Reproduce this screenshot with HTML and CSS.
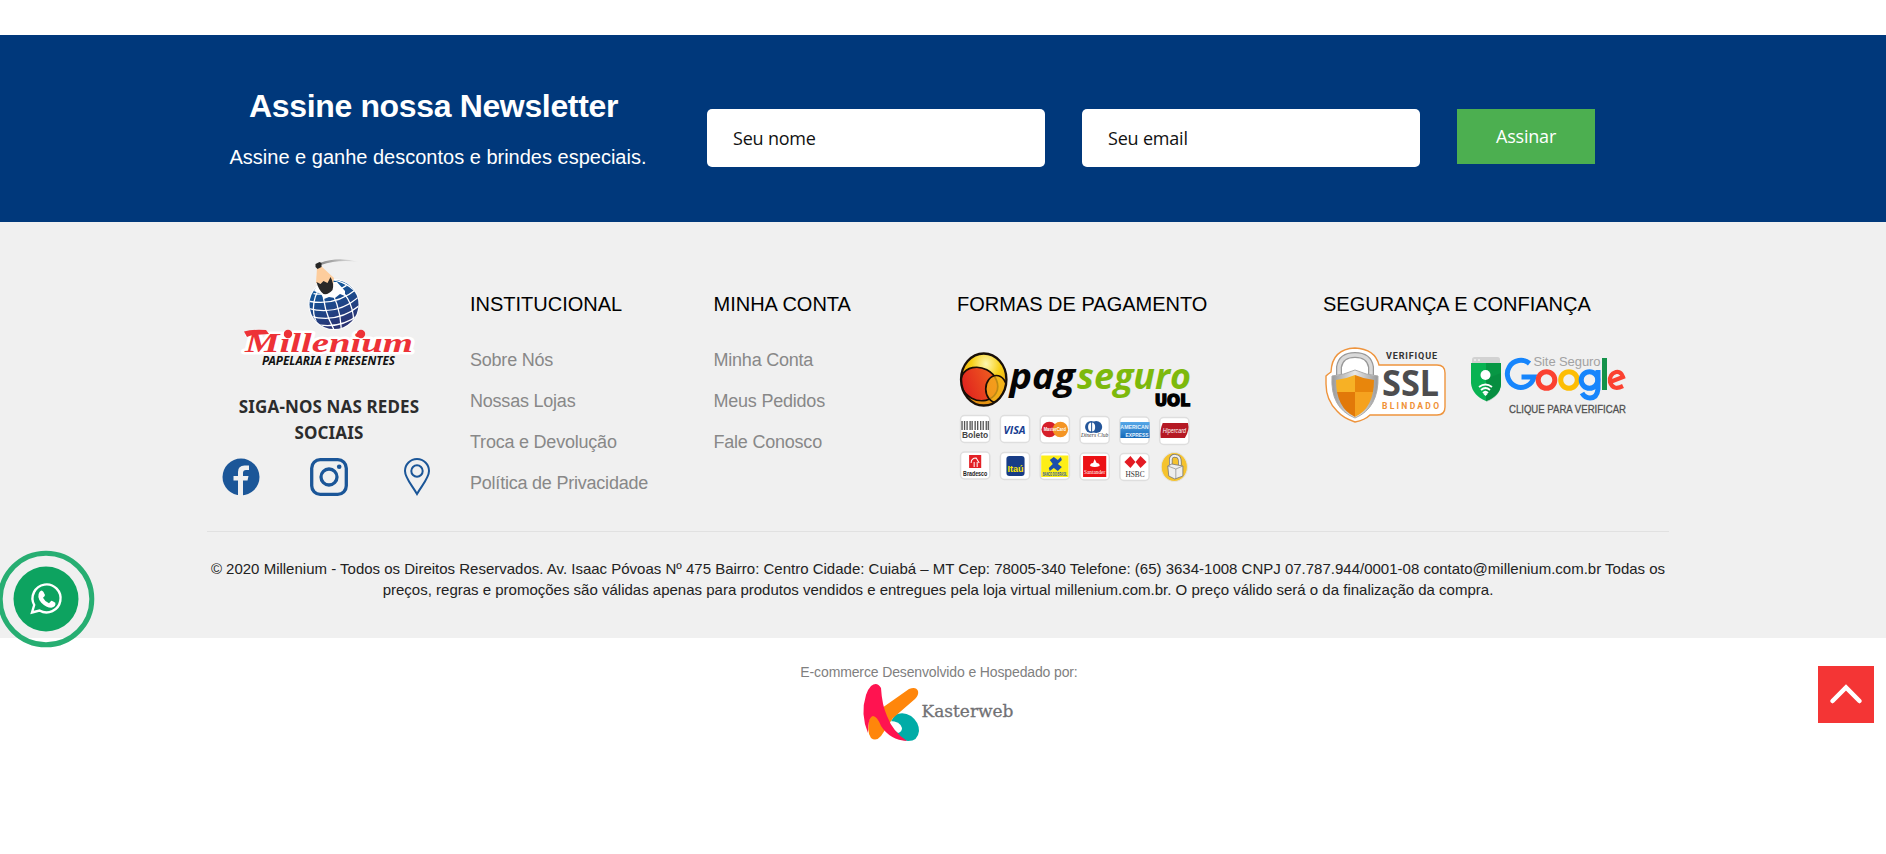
FILE: index.html
```html
<!DOCTYPE html>
<html lang="pt-BR">
<head>
<meta charset="utf-8">
<title>Millenium Papelaria e Presentes</title>
<link rel="stylesheet" href="styles.css">
</head>
<body>
<section class="newsletter">
  <div class="news-copy">
    <h2>Assine nossa Newsletter</h2>
    <p>Assine e ganhe descontos e brindes especiais.</p>
  </div>
  <form class="news-form">
    <input class="field" type="text" placeholder="Seu nome">
    <input class="field" type="text" placeholder="Seu email">
    <button class="subscribe" type="button">Assinar</button>
  </form>
</section>
<footer class="footer">
  <div class="cols">
    <div class="brand">
      <svg class="logo" width="180" height="112" viewBox="0 0 180 112">
        <defs>
          <linearGradient id="globe" x1="0" y1="0" x2=".4" y2="1"><stop offset="0" stop-color="#0864a8"/><stop offset="1" stop-color="#2b3474"/></linearGradient>
          <linearGradient id="swoosh"><stop offset="0" stop-color="#888"/><stop offset="1" stop-color="#eee"/></linearGradient>
          <clipPath id="gc"><circle cx="93" cy="44.500" r="24.500"/></clipPath>
        </defs>
        <circle cx="93" cy="44.500" r="25.500" fill="#fff"/>
        <circle cx="93" cy="44.500" r="24.500" fill="url(#globe)"/>
        <g clip-path="url(#gc)"><g fill="none" stroke="#fff" stroke-width="1.300" transform="rotate(-14 93 45.500)">
          <path d="M88 20q-8 25 0 52M91 20q9 26 3 52M86 22q-22 20-11 46M94 20q22 22 13 50M84 22q-24 10-20 28M98 20q24 12 22 34"/>
          <path d="M69 35q25 12 50 0M67 42q27 15 54 0M67 50q27 15 54 0M68 58q26 14 52 0M76 29q16 7 34 0"/>
        </g></g>
        <path d="M76 26l-3 5 7 3 3 5 5-2 6 1 5-4 5 2 0-5-8-9-14 0z" fill="#fff"/>
        <path d="M79 3q18-7 39-1-21-3-38 3z" fill="url(#swoosh)"/>
        <path d="M76 8l4-2 13 12-1 8-17-3z" fill="#fdcd9d"/>
        <path d="M74.500 4l4-2 2 1v4l-4 2-2-2z" fill="#252525"/>
        <path d="M75.500 22l4 2 3-3 4 2 3-6q4 7 2 13-4 5-9 4-5-4-7-12z" fill="#292929"/>
        <text class="script" x="4" y="91.500" textLength="168" lengthAdjust="spacingAndGlyphs">Millenium</text>
        <path d="M3 71.500q9-2.500 22-1.500l3 4-17 1-5 2z" fill="#ed3237"/>
        <circle cx="47" cy="74" r="4.200" fill="#ed3237"/><circle cx="120" cy="74" r="4.200" fill="#ed3237"/>
        <text class="tagline" x="21" y="105" textLength="133" lengthAdjust="spacingAndGlyphs">PAPELARIA E PRESENTES</text>
      </svg>
      <p class="follow">SIGA-NOS NAS REDES SOCIAIS</p>
      <div class="social">
        <svg width="38" height="38" viewBox="0 0 38 38"><circle cx="19" cy="19" r="18.500" fill="#1b5698"/><path d="M16 38V22.500H11.500V18H16v-4q0-6.500 6.500-6.500h4.500V12h-3q-3 0-3 3v3h5.500l-1 4.500H21V38z" fill="#f0f0f0"/></svg>
        <svg class="insta" width="38" height="38" viewBox="0 0 38 38" fill="none" stroke="#1b5698"><rect x="1.700" y="1.700" width="34.600" height="34.600" rx="8.500" stroke-width="3.300"/><circle cx="19" cy="19" r="8" stroke-width="3.300"/><circle cx="29.200" cy="8.800" r="2.300" fill="#1b5698" stroke="none"/></svg>
        <svg width="28" height="38" viewBox="0 0 28 38" fill="none" stroke="#1b5698" stroke-width="2"><path d="M14 36C9 27 2 20 2 13a12 12 0 0 1 24 0c0 7-7 14-12 23z"/><circle cx="14" cy="13" r="5.700"/></svg>
      </div>
    </div>
    <nav class="col">
      <h3>INSTITUCIONAL</h3>
      <a>Sobre Nós</a><a>Nossas Lojas</a><a>Troca e Devolução</a><a>Política de Privacidade</a>
    </nav>
    <nav class="col">
      <h3>MINHA CONTA</h3>
      <a>Minha Conta</a><a>Meus Pedidos</a><a>Fale Conosco</a>
    </nav>
    <div class="col">
      <h3>FORMAS DE PAGAMENTO</h3>
      <svg class="pay" width="242" height="140" viewBox="0 0 240 140" preserveAspectRatio="none">
        <defs>
          <radialGradient id="gold" cx=".55" cy=".2" r=".8"><stop offset="0" stop-color="#fff8b0"/><stop offset=".4" stop-color="#f7cf16"/><stop offset="1" stop-color="#e28b10"/></radialGradient>
          <linearGradient id="redor" x1="0" y1="1" x2="1" y2="0"><stop offset="0" stop-color="#dd161e"/><stop offset="1" stop-color="#f26a20"/></linearGradient>
          <linearGradient id="amex" x1="0" y1="0" x2="0" y2="1"><stop offset="0" stop-color="#57a8e8"/><stop offset="1" stop-color="#1468b8"/></linearGradient>
          <clipPath id="pc"><ellipse cx="27.500" cy="33.500" rx="22.500" ry="26"/></clipPath>
          <g id="card"><rect x=".5" y=".5" width="29" height="27" rx="4" fill="#fff" stroke="#dedede" stroke-width="1.500"/></g>
        </defs>
        <ellipse cx="27.500" cy="33.500" rx="22.500" ry="26" fill="url(#gold)"/>
        <g clip-path="url(#pc)" stroke="#1a0d05" stroke-width="1.700"><ellipse cx="23" cy="38" rx="19" ry="16" transform="rotate(28 23 38)" fill="url(#redor)"/><ellipse cx="40" cy="43" rx="10.500" ry="13.500" fill="#f5b31b" fill-opacity=".75"/></g>
        <ellipse cx="27.500" cy="33.500" rx="22.500" ry="26" fill="none" stroke="#180f08" stroke-width="2.300"/>
        <text class="pag" x="53" y="43.500" textLength="65" lengthAdjust="spacingAndGlyphs">pag</text>
        <text class="seguro" x="120" y="43.500" textLength="113" lengthAdjust="spacingAndGlyphs">seguro</text>
        <text class="uol" x="197" y="60" textLength="35" lengthAdjust="spacingAndGlyphs">UOL</text>
        <g>
          <use href="#card" x="4" y="69"/><use href="#card" x="43.500" y="69"/><use href="#card" x="83" y="69.500"/><use href="#card" x="122.500" y="70"/><use href="#card" x="162" y="70.500"/><use href="#card" x="201.500" y="71"/>
          <use href="#card" x="4" y="105.500"/><use href="#card" x="43.500" y="106"/><use href="#card" x="83" y="106"/><use href="#card" x="122.500" y="106.500"/><use href="#card" x="162" y="107"/>
        </g>
        <path d="M6 75v9M8.500 75v9M11 75v9M14 75v9M16 75v9M19 75v9M21.500 75v9M24.500 75v9M27 75v9M30 75v9M32 75v9" stroke="#555" stroke-width="1.300"/>
        <text class="tiny" x="6" y="92" textLength="26" lengthAdjust="spacingAndGlyphs" fill="#444" font-size="8.500" font-weight="bold">Boleto</text>
        <text class="visa" x="47" y="88" textLength="22" lengthAdjust="spacingAndGlyphs">VISA</text>
        <circle cx="92.500" cy="83.500" r="7.700" fill="#d61f29"/><circle cx="103.500" cy="83.500" r="7.700" fill="#f49525"/><text class="tiny" x="87" y="85.500" textLength="22" lengthAdjust="spacingAndGlyphs" font-size="5.500" fill="#fff" font-weight="bold">MasterCard</text>
        <circle cx="134" cy="81" r="6" fill="#24569a"/><circle cx="139" cy="81" r="6" fill="#24569a"/><ellipse cx="134.500" cy="81" rx="3.500" ry="4.500" fill="#fff"/><path d="M134.500 76v10" stroke="#24569a"/>
        <text class="serif" x="124" y="91.500" textLength="27" lengthAdjust="spacingAndGlyphs" font-size="6" font-style="italic">Diners Club</text>
        <rect x="163" y="76" width="29" height="16" fill="url(#amex)"/><text class="tiny" x="163" y="83" textLength="28" lengthAdjust="spacingAndGlyphs" font-size="6" fill="#e6f4ff" font-weight="bold">AMERICAN</text><text class="tiny" x="168" y="91" textLength="23" lengthAdjust="spacingAndGlyphs" font-size="6" fill="#e6f4ff" font-weight="bold">EXPRESS</text>
        <path d="M205 77h25q2 7-3 15h-24q-1-8 2-15z" fill="#b51924"/><text class="tiny" x="205" y="87" textLength="23" lengthAdjust="spacingAndGlyphs" font-size="7" font-style="italic" fill="#fff">Hipercard</text>
        <path d="M13 109h12v13H13z" fill="#e32126"/><path d="M15 117q0-5 5-5l3 5M18 121v-5M21 121v-5" stroke="#fff" fill="none"/><text class="tiny" x="7" y="130" textLength="24" lengthAdjust="spacingAndGlyphs" font-size="6.500" font-weight="bold" fill="#222">Bradesco</text>
        <rect x="50" y="110" width="18" height="20" rx="3" fill="#173c86"/><text class="tiny" x="51" y="126" textLength="16" lengthAdjust="spacingAndGlyphs" font-size="9" font-weight="bold" fill="#ffe600">Itaú</text>
        <path d="M84.500 109.500h27V131h-27z" fill="#fdee17"/><path d="M93 114l4-3 4 3 3-3 1 3-4 4 4 3-4 4-4-3-4 3-1-3 4-4z" fill="#1c4eaa"/><text class="tiny" x="86" y="130.500" textLength="24" lengthAdjust="spacingAndGlyphs" font-size="4.500" font-weight="bold" fill="#1c4eaa">BANCO DO BRASIL</text>
        <path d="M126 110h23v21h-23z" fill="#ec1115"/><path d="M133 120q0-3 3-3l1.500-4 2 4q3 0 3 3-5 2-9.500 0z" fill="#fff"/><text class="serif light" x="127" y="128" textLength="21" lengthAdjust="spacingAndGlyphs" font-size="6">Santander</text>
        <path d="M167 116l6-6h10l6 6-6 6h-10z" fill="#e31b23"/><path d="M173 110l5 6 5-6zM173 122l5-6 5 6z" fill="#fff"/><text class="serif" x="168" y="131" textLength="19" lengthAdjust="spacingAndGlyphs" font-size="8.500">HSBC</text>
        <ellipse cx="216.500" cy="121" rx="13" ry="14.500" fill="#f5c32e" stroke="#e3e3e3"/><path d="M213 121v-8q1-4 5-3 4 0 4 6v3" fill="none" stroke="#777" stroke-width="3.500"/><path d="M213 121v-8q1-4 5-3 4 0 4 6v3" fill="none" stroke="#eee" stroke-width="2"/><path d="M210 120l4-2 11 2v10l-8 3-6-3z" fill="#eee" stroke="#777" stroke-width=".8"/><path d="M210 120l8 3v10M218 123l7-3" fill="none" stroke="#888" stroke-width=".7"/>
      </svg>
    </div>
    <div class="col">
      <h3>SEGURANÇA E CONFIANÇA</h3>
      <div class="seals">
        <svg width="126" height="78" viewBox="0 0 126 78">
          <defs><linearGradient id="metal"><stop offset="0" stop-color="#999"/><stop offset=".5" stop-color="#e8e8e8"/><stop offset="1" stop-color="#999"/></linearGradient><clipPath id="sc"><path d="M30 28q9 4 19 5 0 28-19 37-19-9-19-37 10-1 19-5z"/></clipPath></defs>
          <path d="M6 25q1-23 24-24 20 1 24 17h58q8 0 8 8v34q0 8-8 8H45q-5 5-15 7-12-4-18-11Q1 53 1 37V29q2-2 5-4z" fill="#fff" stroke="#ee943d" stroke-width="1.400"/>
          <path d="M14 28v-8Q16 8 30 8t16 12v8" fill="none" stroke="#999" stroke-width="6"/><path d="M14 28v-8Q16 8 30 8t16 12v8" fill="none" stroke="#d9d9d9" stroke-width="3.500"/>
          <path d="M30 23q11 5 23 6 1 32-23 42Q5 61 7 29q12-1 23-6z" fill="url(#metal)" stroke="#aaa"/>
          <g clip-path="url(#sc)"><path d="M10 20h20v25H10z" fill="#f7b125"/><path d="M30 20h20v25H30z" fill="#e8860c"/><path d="M10 45h20v25H10z" fill="#e27909"/><path d="M30 45h20v25H30z" fill="#f5a21f"/></g>
          <text class="verif" x="61" y="12" textLength="51">VERIFIQUE</text>
          <text class="ssl" x="57" y="49" textLength="57" lengthAdjust="spacingAndGlyphs">SSL</text>
          <text class="blind" x="57" y="61.500" textLength="57">BLINDADO</text>
        </svg>
        <svg width="160" height="70" viewBox="0 0 160 70">
          <rect x="3" y="0" width="28" height="16" rx="2.500" fill="#d2d2d2"/><path d="M5 3h2M9 3h2" stroke="#fff"/>
          <path d="M2 6h30v21q-1 12-15 17Q3 38 2 26z" fill="#08b352"/><path d="M17 6h15v21q-1 12-15 17z" fill="#079744"/><path d="M17 22l15-6v12q-1 12-15 17z" fill="#057c38" opacity=".3"/>
          <circle cx="16.500" cy="18" r="5" fill="#fff"/><path d="M10 30q6.500-5 13 0M12 33q4.500-4 9 0M14 36q2.500-2.500 5 0" fill="none" stroke="#fff" stroke-width="1.800"/><path d="M16.500 35l2 2-2 2-2-2z" fill="#fff"/>
          <g fill="none" stroke-width="5"><path d="M60.500 6.500A13.500 13.500 0 1 0 65 20H52.500" stroke="#1685fc"/><circle cx="77.500" cy="23" r="8.300" stroke="#fb4130"/><circle cx="100" cy="23" r="8.300" stroke="#fdbd05"/><circle cx="120.500" cy="23" r="8.300" stroke="#1685fc"/><path d="M129 13v19q-1 9-8 9-5 0-8-5" stroke="#1685fc"/><path d="M135.500 1v32" stroke="#14924a"/><path d="M141 25l13-5q-2-6-7-5-7 2-6 10 3 9 13 4" stroke="#fb4130" stroke-width="4.200"/></g>
          <text class="site" x="64.500" y="9" textLength="67">Site Seguro</text>
          <text class="clique" x="40" y="56" textLength="117" lengthAdjust="spacingAndGlyphs">CLIQUE PARA VERIFICAR</text>
        </svg>
      </div>
    </div>
  </div>
  <p class="legal">© 2020 Millenium - Todos os Direitos Reservados. Av. Isaac Póvoas Nº 475 Bairro: Centro Cidade: Cuiabá – MT Cep: 78005-340 Telefone: (65) 3634-1008 CNPJ 07.787.944/0001-08 contato@millenium.com.br Todas os<br>preços, regras e promoções são válidas apenas para produtos vendidos e entregues pela loja virtual millenium.com.br. O preço válido será o da finalização da compra.</p>
</footer>
<div class="credit">
  <p>E-commerce Desenvolvido e Hospedado por:</p>
  <svg width="152" height="60" viewBox="0 0 152 60">
    <path d="M32 32q8-4 16 1 8 6 8 15-1 10-11 10Q33 57 23 46z" fill="#00aca7"/><path d="M27 38q10 0 12 7 0 4-4 5l-9-7z" fill="#fff"/>
    <path d="M19 25L46 6q7-3 9 2 1 4-3 8L30 35 18 53q-5 6-10 2-5-7-1-22z" fill="#ff860b"/>
    <path d="M8 3q6-5 10 2 1 17 6 28 6 16 20 25-17-1-26-15-4-10-8-10-5 1-5 17Q-3 31 3 12 5 6 8 3z" fill="#ff1350"/>
    <text class="kaster" x="58.500" y="34" textLength="92" lengthAdjust="spacingAndGlyphs">Kasterweb</text>
  </svg>
</div>
<a class="whats"><svg width="96" height="98" viewBox="0 0 96 98"><circle cx="46" cy="49" r="45.800" fill="none" stroke="#27ae72" stroke-width="5"/><circle cx="46" cy="49" r="32.500" fill="#0da360"/><path d="M32 62.500l2.200-7.500A14 14 0 1 1 39.500 60.500z" fill="none" stroke="#fff" stroke-width="2.400"/><path d="M39.500 42q2-3 4 0l1.500 3q0 1-2 2.800 2 4 6 5.500l2.300-2.500q1 0 4 2 1 4-4 5-5 0-10-5-5-6-1.800-10.800z" fill="#fff"/></svg></a>
<a class="top"><svg width="56" height="57" viewBox="0 0 56 57"><path d="M14.500 35L28 21.500 41.500 35" fill="none" stroke="#fff" stroke-width="4.500" stroke-linecap="round"/></svg></a>
</body>
</html>
```
FILE: styles.css
```css
* { box-sizing: border-box; }
body { margin: 0; padding-top: 35px; background: #fff; font-family: "Liberation Sans", Arial, sans-serif; }
h2, h3, p { margin: 0; font-weight: normal; }
svg { display: block; overflow: visible; }
.newsletter { height: 187px; background: #00387b; display: flex; align-items: flex-start; padding-left: 214px; color: #fff; }
.news-copy { width: 448px; margin-right: 45px; text-align: center; padding-top: 52px; white-space: nowrap; }
.news-copy h2 { font-size: 32px; line-height: 38px; font-weight: bold; letter-spacing: -.35px; padding-right: 9px; }
.news-copy p { font-size: 20px; line-height: 24px; margin-top: 20px; }
.news-form { display: flex; gap: 37px; margin-top: 74px; align-items: flex-start; }
.field { width: 338px; height: 58px; border: 0; border-radius: 5px; padding: 0 26px; font: 18px "Open Sans", sans-serif; letter-spacing: -.2px; background: #fff; }
.field::placeholder { color: #111; opacity: 1; }
.subscribe { width: 138px; height: 55px; border: 0; padding-bottom: 3px; background: #4caf50; color: #fff; font: 18px "Open Sans", sans-serif; letter-spacing: -.2px; }
.footer { background: #f0f0f0; height: 416px; padding: 32px 217px 0 207px; }
.cols { display: grid; grid-template-columns: 263px 243.500px 243.500px 366px 1fr; height: 278px; border-bottom: 1px solid #e1e1e1; }
.logo { margin: 6px 0 0 34px; }
.follow { width: 214px; margin: 22px 0 0 15px; text-align: center; font: bold 17px/26px "Noto Sans", sans-serif; letter-spacing: .14px; color: #2c2c2c; }
.social { display: flex; width: 209px; margin: 12px 0 0 15px; justify-content: space-between; align-items: center; }
.insta { margin-right: 5px; }
.col { padding-top: 37px; }
.col h3 { font-size: 20px; line-height: 26px; color: #000; margin-bottom: 23px; white-space: nowrap; }
.col a { display: block; font-size: 18px; line-height: 41px; letter-spacing: -.22px; color: #888; white-space: nowrap; }
.pay { margin: 29px 0 0 -1px; }
.seals { display: flex; gap: 18px; margin-left: 2px; align-items: flex-start; padding-top: 7px; }
.seals svg + svg { margin-top: 10px; }
.legal { text-align: center; white-space: nowrap; font-size: 15px; line-height: 21px; color: #222; margin-top: 26px; }
.credit { display: flex; flex-direction: column; align-items: center; padding-right: 8px; margin-top: 24px; color: #808080; font-size: 14px; line-height: 20px; letter-spacing: -.13px; }
.credit svg { margin-top: 1px; letter-spacing: normal; }
.whats { position: fixed; left: 0; top: 550px; }
.top { position: fixed; left: 1818px; top: 666px; background: #f43535; }
.script { font: italic bold 27px "Liberation Serif", serif; fill: #ed3237; stroke: #fff; stroke-width: 5px; stroke-linejoin: round; paint-order: stroke; }
.tagline { font: italic bold 12px "Noto Sans", sans-serif; fill: #111; }
.pag, .seguro { font: italic bold 35px "Open Sans", sans-serif; fill: #050505; }
.seguro { fill: #7db90c; }
.uol { font: bold 16px "DejaVu Sans", sans-serif; stroke: #000; stroke-width: 1.500px; }
.tiny { font-family: "Liberation Sans", sans-serif; }
.serif { font-family: "Liberation Serif", serif; fill: #333; }
.light { fill: #fff; }
.visa { font: italic bold 11px "Open Sans", sans-serif; fill: #173d91; }
.verif { font: bold 9px Roboto, sans-serif; fill: #333; }
.ssl { font: bold 35px "Noto Sans", sans-serif; fill: #4d4d4f; }
.blind { font: bold 8.500px Roboto, sans-serif; fill: #ef9136; }
.site { font: 13px "Liberation Sans", sans-serif; fill: #a2a2a2; }
.clique { font: 11px "Liberation Sans", sans-serif; fill: #505050; stroke: #505050; stroke-width: .3px; }
.kaster { font: 17px "DejaVu Serif", serif; fill: #717174; stroke: #717174; stroke-width: .3px; }
```
